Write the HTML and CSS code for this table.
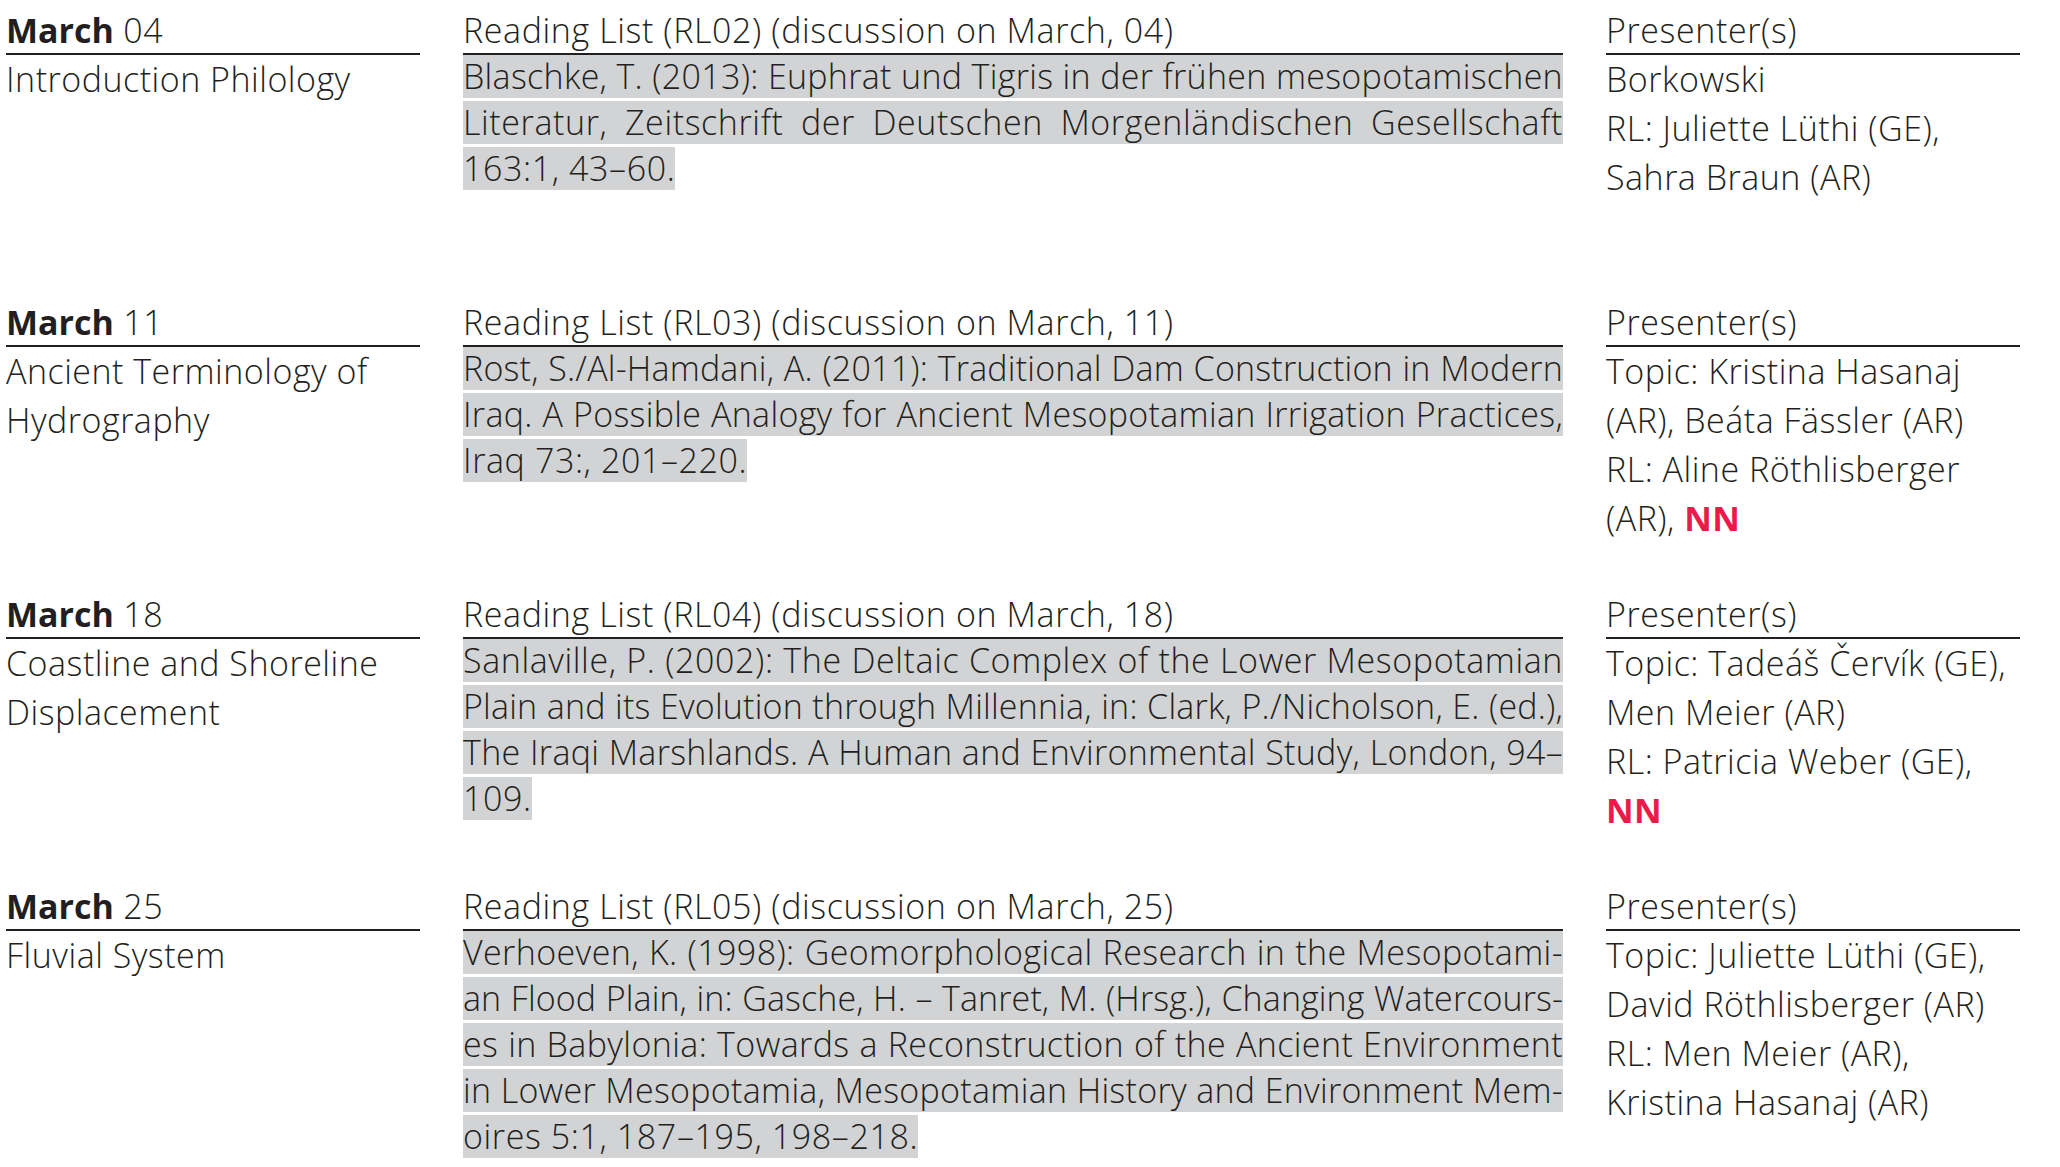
FILE: index.html
```html
<!DOCTYPE html>
<html lang="en">
<head>
<meta charset="utf-8">
<title>Schedule</title>
<link rel="stylesheet" href="styles.css">
</head>
<body>
<main class="schedule">

  <section class="session">
    <div class="col col-topic">
      <h2 class="col-head"><strong>March</strong> 04</h2>
      <p class="plain">Introduction Philology</p>
    </div>
    <div class="col col-reading">
      <h2 class="col-head">Reading List (RL02) (discussion on March, 04)</h2>
      <div class="ref">
        <span class="ln">Blaschke, T. (2013): Euphrat und Tigris in der frühen mesopotamischen</span>
        <span class="ln">Literatur, Zeitschrift der Deutschen Morgenländischen Gesellschaft</span>
        <span class="ln last">163:1, 43–60.</span>
      </div>
    </div>
    <div class="col col-presenters">
      <h2 class="col-head">Presenter(s)</h2>
      <p class="plain">Borkowski</p>
      <p class="plain">RL: Juliette Lüthi (GE),<br>Sahra Braun (AR)</p>
    </div>
  </section>

  <section class="session">
    <div class="col col-topic">
      <h2 class="col-head"><strong>March</strong> 11</h2>
      <p class="plain">Ancient Terminology of<br>Hydrography</p>
    </div>
    <div class="col col-reading">
      <h2 class="col-head">Reading List (RL03) (discussion on March, 11)</h2>
      <div class="ref">
        <span class="ln">Rost, S./Al-Hamdani, A. (2011): Traditional Dam Construction in Modern</span>
        <span class="ln">Iraq. A Possible Analogy for Ancient Mesopotamian Irrigation Practices,</span>
        <span class="ln last">Iraq 73:, 201–220.</span>
      </div>
    </div>
    <div class="col col-presenters">
      <h2 class="col-head">Presenter(s)</h2>
      <p class="plain">Topic: Kristina Hasanaj<br>(AR), Beáta Fässler (AR)</p>
      <p class="plain">RL: Aline Röthlisberger<br>(AR), <b class="nn">NN</b></p>
    </div>
  </section>

  <section class="session">
    <div class="col col-topic">
      <h2 class="col-head"><strong>March</strong> 18</h2>
      <p class="plain">Coastline and Shoreline<br>Displacement</p>
    </div>
    <div class="col col-reading">
      <h2 class="col-head">Reading List (RL04) (discussion on March, 18)</h2>
      <div class="ref">
        <span class="ln">Sanlaville, P. (2002): The Deltaic Complex of the Lower Mesopotamian</span>
        <span class="ln">Plain and its Evolution through Millennia, in: Clark, P./Nicholson, E. (ed.),</span>
        <span class="ln">The Iraqi Marshlands. A Human and Environmental Study, London, 94–</span>
        <span class="ln last">109.</span>
      </div>
    </div>
    <div class="col col-presenters">
      <h2 class="col-head">Presenter(s)</h2>
      <p class="plain">Topic: Tadeáš Červík (GE),<br>Men Meier (AR)</p>
      <p class="plain">RL: Patricia Weber (GE),<br><b class="nn">NN</b></p>
    </div>
  </section>

  <section class="session">
    <div class="col col-topic">
      <h2 class="col-head"><strong>March</strong> 25</h2>
      <p class="plain">Fluvial System</p>
    </div>
    <div class="col col-reading">
      <h2 class="col-head">Reading List (RL05) (discussion on March, 25)</h2>
      <div class="ref">
        <span class="ln">Verhoeven, K. (1998): Geomorphological Research in the Mesopotami-</span>
        <span class="ln">an Flood Plain, in: Gasche, H. – Tanret, M. (Hrsg.), Changing Watercours-</span>
        <span class="ln">es in Babylonia: Towards a Reconstruction of the Ancient Environment</span>
        <span class="ln">in Lower Mesopotamia, Mesopotamian History and Environment Mem-</span>
        <span class="ln last">oires 5:1, 187–195, 198–218.</span>
      </div>
    </div>
    <div class="col col-presenters">
      <h2 class="col-head">Presenter(s)</h2>
      <p class="plain">Topic: Juliette Lüthi (GE),<br>David Röthlisberger (AR)</p>
      <p class="plain">RL: Men Meier (AR),<br>Kristina Hasanaj (AR)</p>
    </div>
  </section>

</main>
<script src="fit.js"></script>
</body>
</html>
```

FILE: styles.css
```css
html, body {
  margin: 0;
  padding: 0;
  background: #ffffff;
}

body {
  font-family: "Open Sans", "Noto Sans", "Liberation Sans", sans-serif;
  font-weight: 300;
  font-size: 34px;
  letter-spacing: 0.5px;
  color: #231f20;
}

.schedule {
  padding-left: 6px;
  width: 2015px;
}

.session {
  display: grid;
  grid-template-columns: 414px 1100px 414px;
  column-gap: 43px;
  height: 292px;
  align-items: start;
}

.col-head {
  margin: 0;
  padding-top: 7px;
  height: 46px;
  line-height: 46px;
  font-size: 34px;
  font-weight: 300;
  letter-spacing: 0.6px;
  border-bottom: 2px solid #231f20;
  white-space: nowrap;
}

.col-head strong {
  font-weight: 700;
  letter-spacing: 0;
}

.plain {
  margin: 0;
  line-height: 49px;
  white-space: nowrap;
}

.ref {
  display: flex;
  flex-direction: column;
  align-items: stretch;
  gap: 3px;
}

.ln {
  display: block;
  height: 43px;
  line-height: 43px;
  background: #d1d3d4;
  letter-spacing: 0.6px;
  text-align: justify;
  text-align-last: justify;
  white-space: nowrap;
}

.ln.last {
  align-self: flex-start;
  text-align-last: left;
}

.nn {
  color: #ec1a4b;
  font-weight: 700;
  letter-spacing: 0.3px;
}
```

FILE: fit.js
```js
// Condense justified reference lines that are wider than the column,
// as the typeset original does.
document.querySelectorAll('.ln:not(.last)').forEach(function (el) {
  var ls = 0.6;
  var guard = 0;
  while (el.scrollWidth > el.clientWidth && guard < 60) {
    ls -= 0.1;
    el.style.letterSpacing = ls.toFixed(2) + 'px';
    guard++;
  }
});
```
